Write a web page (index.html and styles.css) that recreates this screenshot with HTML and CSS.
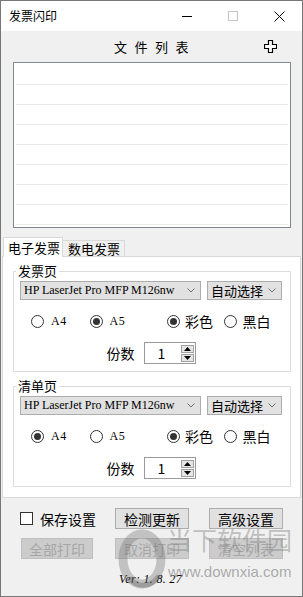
FILE: index.html
```html
<!DOCTYPE html>
<html>
<head>
    <title>发票闪印</title>
    <link rel="stylesheet" href="styles.css">
</head>
<body>
    <div class="window">
        <div class="titlebar">
            <span class="title">发票闪印</span>
            <div class="caption-btns">
                <span class="cap-btn"><svg width="10" height="10" viewBox="0 0 10 10"><path d="M0 5.5h10" stroke="#000" stroke-width="1"/></svg></span>
                <span class="cap-btn"><svg width="10" height="10" viewBox="0 0 10 10"><rect x="0.5" y="0.5" width="9" height="9" fill="none" stroke="#c4c4c4"/></svg></span>
                <span class="cap-btn"><svg width="11" height="11" viewBox="0 0 11 11"><path d="M0.5 0.5l10 10M10.5 0.5l-10 10" stroke="#000" stroke-width="1"/></svg></span>
            </div>
        </div>

        <div class="list-head">
            <span></span>
            <span class="list-title">文件列表</span>
            <span class="add-btn"><svg width="13" height="13" viewBox="0 0 13 13"><path d="M4.5 0.5h4v4h4v4h-4v4h-4v-4h-4v-4h4z" fill="#fff" stroke="#000" stroke-width="1.2"/></svg></span>
        </div>

        <div class="file-list">
            <div class="row"></div>
            <div class="row"></div>
            <div class="row"></div>
            <div class="row"></div>
            <div class="row"></div>
            <div class="row"></div>
            <div class="row"></div>
            <div class="row"></div>
        </div>

        <div class="tabs">
            <div class="tab active">电子发票</div>
            <div class="tab">数电发票</div>
        </div>

        <div class="tab-panel">
            <fieldset class="group">
                <legend>发票页</legend>
                <div class="printer-row">
                    <div class="select printer"><span>HP LaserJet Pro MFP M126nw</span><svg class="chev" width="8" height="5" viewBox="0 0 8 5"><path d="M0.5 0.5l3.5 3.5 3.5-3.5" fill="none" stroke="#707070"/></svg></div>
                    <div class="select auto"><span>自动选择</span><svg class="chev" width="8" height="5" viewBox="0 0 8 5"><path d="M0.5 0.5l3.5 3.5 3.5-3.5" fill="none" stroke="#707070"/></svg></div>
                </div>
                <div class="radio-row">
                    <label class="opt paper"><span class="radio"></span><span class="latin">A4</span></label>
                    <label class="opt paper wide"><span class="radio on"></span><span class="latin">A5</span></label>
                    <label class="opt color"><span class="radio on"></span>彩色</label>
                    <label class="opt color"><span class="radio"></span>黑白</label>
                </div>
                <div class="copies-row">
                    <span>份数</span>
                    <div class="spin">
                        <span class="spin-val">1</span>
                        <div class="spin-btns">
                            <span class="spin-btn"><svg width="7" height="4" viewBox="0 0 7 4"><path d="M0 4h7L3.5 0z" fill="#000"/></svg></span>
                            <span class="spin-btn"><svg width="7" height="4" viewBox="0 0 7 4"><path d="M0 0h7L3.5 4z" fill="#000"/></svg></span>
                        </div>
                    </div>
                </div>
            </fieldset>

            <fieldset class="group">
                <legend>清单页</legend>
                <div class="printer-row">
                    <div class="select printer"><span>HP LaserJet Pro MFP M126nw</span><svg class="chev" width="8" height="5" viewBox="0 0 8 5"><path d="M0.5 0.5l3.5 3.5 3.5-3.5" fill="none" stroke="#707070"/></svg></div>
                    <div class="select auto"><span>自动选择</span><svg class="chev" width="8" height="5" viewBox="0 0 8 5"><path d="M0.5 0.5l3.5 3.5 3.5-3.5" fill="none" stroke="#707070"/></svg></div>
                </div>
                <div class="radio-row">
                    <label class="opt paper"><span class="radio on"></span><span class="latin">A4</span></label>
                    <label class="opt paper wide"><span class="radio"></span><span class="latin">A5</span></label>
                    <label class="opt color"><span class="radio on"></span>彩色</label>
                    <label class="opt color"><span class="radio"></span>黑白</label>
                </div>
                <div class="copies-row">
                    <span>份数</span>
                    <div class="spin">
                        <span class="spin-val">1</span>
                        <div class="spin-btns">
                            <span class="spin-btn"><svg width="7" height="4" viewBox="0 0 7 4"><path d="M0 4h7L3.5 0z" fill="#000"/></svg></span>
                            <span class="spin-btn"><svg width="7" height="4" viewBox="0 0 7 4"><path d="M0 0h7L3.5 4z" fill="#000"/></svg></span>
                        </div>
                    </div>
                </div>
            </fieldset>
        </div>

        <div class="actions">
            <label class="check"><span class="checkbox"></span>保存设置</label>
            <button class="btn">检测更新</button>
            <button class="btn">高级设置</button>
            <button class="btn disabled first">全部打印</button>
            <button class="btn disabled">取消打印</button>
            <button class="btn disabled">清空列表</button>
        </div>

        <div class="version">Ver: 1. 8. 27</div>

        <div class="watermark">
            <svg class="wm-logo" width="50" height="62" viewBox="0 0 50 62"><ellipse cx="25" cy="31" rx="19" ry="25" fill="none" stroke="rgba(110,110,110,0.35)" stroke-width="9"/><path d="M12 50c8 10 22 10 30-2" fill="none" stroke="rgba(90,90,90,0.35)" stroke-width="5"/></svg>
            <span class="wm-name">当下软件园</span>
            <span class="wm-url">www.downxia.com</span>
        </div>
    </div>
</body>
</html>
```

FILE: styles.css
```css
body {
    margin: 0;
    padding: 0;
    font-family: "Noto Sans CJK SC", sans-serif;
    color: #000;
}

.window {
    position: relative;
    width: 303px;
    height: 597px;
    box-sizing: border-box;
    border: 1px solid #777;
    background: #f0f0f0;
    overflow: hidden;
}

/* title bar */
.titlebar {
    height: 30px;
    background: #fff;
    display: flex;
    align-items: center;
    justify-content: space-between;
}

.title {
    padding-left: 8px;
    font-size: 12px;
    line-height: 14px;
}

.caption-btns {
    display: flex;
    height: 30px;
}

.cap-btn {
    width: 46px;
    display: flex;
    align-items: center;
    justify-content: center;
}

.cap-btn svg {
    display: block;
}

/* file list */
.list-head {
    height: 31px;
    display: grid;
    grid-template-columns: 1fr auto 1fr;
    align-items: center;
}

.list-title {
    font-size: 13px;
    line-height: 16px;
    letter-spacing: 7.5px;
    padding-left: 7px;
}

.add-btn {
    justify-self: end;
    padding-right: 25px;
    height: 13px;
}

.add-btn svg {
    display: block;
}

.file-list {
    width: 278px;
    height: 166px;
    box-sizing: border-box;
    margin-left: 12px;
    border: 1px solid #828790;
    background: #fff;
    padding: 2px 2px 0;
}

.file-list .row {
    height: 20px;
    box-sizing: border-box;
    border-bottom: 1px solid #e9e9e9;
}

/* tabs */
.tabs {
    display: flex;
    align-items: flex-end;
    margin-top: 9px;
    padding-left: 2px;
    margin-bottom: -1px;
    position: relative;
    z-index: 1;
}

.tab {
    font-size: 13px;
    line-height: 15px;
    height: 15px;
    padding: 0 4px 0 5px;
    border: 1px solid #d9d9d9;
    border-bottom: none;
    border-left: none;
    background: #f0f0f0;
    margin-bottom: 1px;
}

.tab.active {
    line-height: 19px;
    width: 60px;
    box-sizing: border-box;
    padding: 0 0 0 4px;
    height: 20px;
    border-left: 1px solid #d9d9d9;
    background: #fff;
    margin-bottom: 0;
}

.tab-panel {
    margin-left: 1px;
    width: 299px;
    height: 242px;
    box-sizing: border-box;
    border: 1px solid #d9d9d9;
    background: #fff;
    overflow: hidden;
}

/* group boxes */
.group {
    width: 278px;
    box-sizing: border-box;
    margin: 6px 0 0 10px;
    padding: 2px 8px 7px 6px;
    border: 1px solid #dcdcdc;
    min-width: 0;
}

.group legend {
    font-size: 13px;
    line-height: 16px;
    padding: 0 2px;
    margin-left: -4px;
}

.printer-row {
    display: flex;
    gap: 6px;
}

.select {
    height: 19px;
    box-sizing: border-box;
    border: 1px solid #adadad;
    background: #e1e1e1;
    display: flex;
    align-items: center;
    justify-content: space-between;
    padding: 0 5px 0 3px;
}

.select.printer {
    width: 181px;
    font-family: "Liberation Serif", serif;
    font-size: 12px;
    white-space: nowrap;
}

.select.auto {
    width: 75px;
    font-size: 13px;
    line-height: 17px;
}

.chev {
    display: block;
    flex-shrink: 0;
}

.radio-row {
    display: flex;
    align-items: center;
    height: 16px;
    margin-top: 13px;
    padding-left: 11px;
}

.opt {
    display: flex;
    align-items: center;
    font-size: 14px;
    line-height: 16px;
}

.opt.paper {
    width: 59px;
    gap: 7px;
}

.opt.paper.wide {
    width: 78px;
}

.opt.color {
    width: 58px;
    gap: 5px;
}

.latin {
    font-family: "Liberation Serif", serif;
    font-size: 12px;
    letter-spacing: 0.5px;
}

.radio {
    width: 13px;
    height: 13px;
    box-sizing: border-box;
    border: 1px solid #333;
    border-radius: 50%;
    background: #fff;
    display: flex;
    align-items: center;
    justify-content: center;
}

.radio.on::after {
    content: "";
    width: 7px;
    height: 7px;
    border-radius: 50%;
    background: #333;
}

.copies-row {
    display: flex;
    justify-content: center;
    align-items: center;
    gap: 9px;
    margin-top: 13px;
    font-size: 14px;
    line-height: 16px;
}

.spin {
    width: 52px;
    height: 22px;
    box-sizing: border-box;
    border: 1px solid #9a9a9a;
    background: #fff;
    display: flex;
    align-items: center;
    justify-content: space-between;
    padding: 0 1px 0 13px;
}

.spin-val {
    font-size: 14px;
    line-height: 16px;
}

.spin-btns {
    display: flex;
    flex-direction: column;
    gap: 1px;
}

.spin-btn {
    width: 13px;
    height: 8px;
    box-sizing: border-box;
    border: 1px solid #a0a0a0;
    background: #e6e6e6;
    display: flex;
    align-items: center;
    justify-content: center;
}

.spin-btn svg {
    display: block;
}

/* bottom actions */
.actions {
    display: grid;
    grid-template-columns: 95px 94px 74px;
    row-gap: 9px;
    margin-top: 10px;
    padding-left: 19px;
}

.check {
    display: flex;
    align-items: center;
    gap: 7px;
    font-size: 14px;
    line-height: 16px;
}

.checkbox {
    width: 13px;
    height: 13px;
    box-sizing: border-box;
    border: 1px solid #333;
    background: #fff;
}

.btn {
    width: 74px;
    height: 21px;
    box-sizing: border-box;
    margin: 0;
    padding: 0;
    border: 1px solid #adadad;
    background: #e1e1e1;
    font-family: "Noto Sans CJK SC", sans-serif;
    font-size: 14px;
    line-height: 18px;
    color: #000;
}

.btn.disabled {
    background: #cccccc;
    border-color: #bfbfbf;
    color: #a6a6a6;
}

.btn.first {
    width: 72px;
    margin-left: 1px;
}

.version {
    margin-top: 13px;
    text-align: center;
    padding-right: 2px;
    font-family: "Liberation Serif", serif;
    font-style: italic;
    font-size: 12px;
    line-height: 14px;
    letter-spacing: 0.3px;
}

/* watermark overlay */
.watermark {
    position: absolute;
    left: 116px;
    top: 527px;
    width: 180px;
    height: 64px;
    pointer-events: none;
}

.wm-logo {
    position: absolute;
    left: 0;
    top: 0;
}

.wm-name {
    position: absolute;
    left: 50px;
    top: -4px;
    font-size: 25px;
    line-height: 30px;
    color: rgba(130, 130, 130, 0.45);
    white-space: nowrap;
}

.wm-url {
    position: absolute;
    left: 51px;
    top: 35px;
    font-family: "Liberation Sans", sans-serif;
    font-size: 15px;
    line-height: 17px;
    color: rgba(120, 120, 120, 0.6);
    white-space: nowrap;
}
```
